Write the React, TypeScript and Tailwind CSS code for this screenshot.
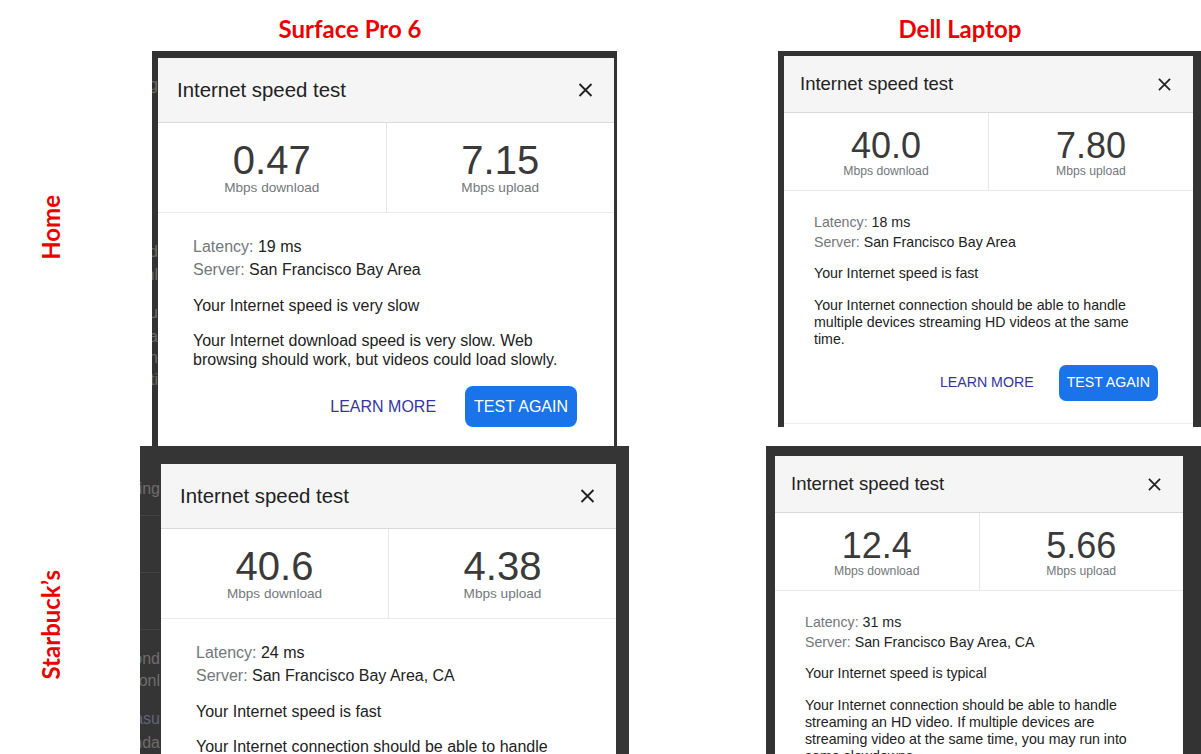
import React from 'react'

type Size = 'lg' | 'sm'

interface Result {
  down: string
  up: string
  latency: string
  server: string
  verdict: string
  detail: string
}

// two scales: Surface Pro screenshots are a little bigger than the Dell ones
const styles = {
  lg: {
    header: 'h-[65px] pl-[19px] pr-[21px]',
    title: 'text-[20.4px]',
    close: 'w-[15px] h-[14px]',
    speeds: 'h-[90px]',
    cell: 'pt-[17px]',
    number: 'text-[40px] leading-[40px]',
    unit: 'text-[13.6px] leading-[16px]',
    body: 'pt-[22px] pl-[35px] text-[16px]',
    meta: 'leading-[23px]',
    verdict: 'mt-[15px] leading-[19px]',
    detail: 'mt-[16px] leading-[19px] w-[385px]',
    actions: 'mt-[17px] pr-[37px] gap-[29px]',
    button: 'h-[41px] px-[9px] rounded-[8px]',
  },
  sm: {
    header: 'h-[57px] pl-[16px] pr-[22px]',
    title: 'text-[18.5px]',
    close: 'w-[13px] h-[13px]',
    speeds: 'h-[78px]',
    cell: 'pt-[15px]',
    number: 'text-[36px] leading-[36px]',
    unit: 'text-[12.2px] leading-[14px]',
    body: 'pt-[21px] pl-[30px] text-[14.2px]',
    meta: 'leading-[20px]',
    verdict: 'mt-[13px] leading-[17px]',
    detail: 'mt-[15px] leading-[17px] w-[332px]',
    actions: 'mt-[17px] pr-[35px] gap-[25px]',
    button: 'h-[36px] px-[8px] rounded-[7px]',
  },
}

const CloseIcon: React.FC<{ className: string }> = ({ className }) => (
  <svg className={className} viewBox="0 0 14 14" fill="none">
    <path d="M1 1L13 13M13 1L1 13" stroke="#222" strokeWidth="1.9" />
  </svg>
)

const Card: React.FC<{ size: Size; r: Result; footer?: boolean }> = ({ size, r, footer }) => {
  const s = styles[size]
  return (
    <div className="flex h-full flex-col overflow-hidden bg-white text-[#222]">
      <div className={`flex shrink-0 items-center justify-between border-b border-[#d9d9d9] bg-[#f5f5f5] ${s.header}`}>
        <span className={s.title}>Internet speed test</span>
        <CloseIcon className={s.close} />
      </div>
      <div className={`flex shrink-0 border-b border-[#ebebeb] ${s.speeds}`}>
        <div className={`flex flex-1 flex-col items-center border-r border-[#e6e6e6] ${s.cell}`}>
          <span className={`text-[#3a3a3a] ${s.number}`}>{r.down}</span>
          <span className={`text-[#73777b] ${s.unit}`}>Mbps download</span>
        </div>
        <div className={`flex flex-1 flex-col items-center ${s.cell}`}>
          <span className={`text-[#3a3a3a] ${s.number}`}>{r.up}</span>
          <span className={`text-[#73777b] ${s.unit}`}>Mbps upload</span>
        </div>
      </div>
      <div className={`flex flex-1 flex-col ${s.body}`}>
        <div className={s.meta}>
          <span className="text-[#73777b]">Latency:</span> {r.latency}
        </div>
        <div className={s.meta}>
          <span className="text-[#73777b]">Server:</span> {r.server}
        </div>
        <div className={s.verdict}>{r.verdict}</div>
        <div className={s.detail}>{r.detail}</div>
        <div className={`flex shrink-0 items-center justify-end ${s.actions}`}>
          <span className="text-[#36369a]">LEARN MORE</span>
          <span className={`flex items-center bg-[#1a73e8] text-white ${s.button}`}>TEST AGAIN</span>
        </div>
      </div>
      {footer && <div className="h-[4px] shrink-0 border-t border-[#ececec]" />}
    </div>
  )
}

const surfaceHome: Result = {
  down: '0.47',
  up: '7.15',
  latency: '19 ms',
  server: 'San Francisco Bay Area',
  verdict: 'Your Internet speed is very slow',
  detail: 'Your Internet download speed is very slow. Web browsing should work, but videos could load slowly.',
}

const dellHome: Result = {
  down: '40.0',
  up: '7.80',
  latency: '18 ms',
  server: 'San Francisco Bay Area',
  verdict: 'Your Internet speed is fast',
  detail: 'Your Internet connection should be able to handle multiple devices streaming HD videos at the same time.',
}

const surfaceCafe: Result = {
  down: '40.6',
  up: '4.38',
  latency: '24 ms',
  server: 'San Francisco Bay Area, CA',
  verdict: 'Your Internet speed is fast',
  detail: 'Your Internet connection should be able to handle multiple devices streaming HD videos at the same time.',
}

const dellCafe: Result = {
  down: '12.4',
  up: '5.66',
  latency: '31 ms',
  server: 'San Francisco Bay Area, CA',
  verdict: 'Your Internet speed is typical',
  detail:
    'Your Internet connection should be able to handle streaming an HD video. If multiple devices are streaming video at the same time, you may run into some slowdowns.',
}

const label = "font-['Lato',sans-serif] font-bold text-[24px] leading-[30px] text-[#ea0000]"

export default function App() {
  return (
    <div className="flex h-[754px] w-[1201px] flex-col overflow-hidden bg-white font-['Liberation_Sans',Arial,sans-serif]">
      {/* column titles */}
      <div className="flex h-[51px] shrink-0 items-start pt-[14px]">
        <div className={`ml-[250px] w-[200px] text-center ${label}`}>Surface Pro 6</div>
        <div className={`ml-[410px] w-[200px] text-center ${label}`}>Dell Laptop</div>
      </div>

      {/* Home row */}
      <div className="flex h-[395px] shrink-0 items-start">
        <div className="flex h-full w-[152px] shrink-0 items-start">
          <span className={`ml-[36px] mt-[144px] rotate-180 [writing-mode:vertical-rl] ${label}`}>Home</span>
        </div>
        <div className="flex h-[395px] w-[465px] shrink-0 overflow-hidden bg-[#333]">
          {/* dimmed page behind the dialog */}
          <div className="flex w-[6px] shrink-0 flex-col overflow-hidden text-[16px] leading-[20px] text-[#6b6b6b]">
            <div className="mt-[24px] flex justify-end whitespace-nowrap">ing</div>
            <div className="mt-[147px] flex justify-end whitespace-nowrap">ond</div>
            <div className="mt-[3px] flex justify-end whitespace-nowrap">onl</div>
            <div className="mt-[18px] flex justify-end whitespace-nowrap">isu</div>
            <div className="mt-[4px] flex justify-end whitespace-nowrap">rda</div>
            <div className="mt-[1px] flex justify-end whitespace-nowrap">ern</div>
            <div className="mt-[2px] flex justify-end whitespace-nowrap">ti</div>
          </div>
          <div className="flex-1 pt-[7px] pr-[3px]">
            <Card size="lg" r={surfaceHome} />
          </div>
        </div>
        <div className="ml-[161px] flex h-[376px] w-[423px] shrink-0 overflow-hidden bg-[#333] pl-[6px] pt-[5px] pr-[8px]">
          <div className="h-full flex-1">
            <Card size="sm" r={dellHome} footer />
          </div>
        </div>
      </div>

      {/* Starbuck's row */}
      <div className="flex h-[308px] shrink-0 items-start">
        <div className="flex h-full w-[140px] shrink-0 items-start">
          <span className={`ml-[36px] mt-[124px] rotate-180 [writing-mode:vertical-rl] ${label}`}>Starbuck’s</span>
        </div>
        <div className="flex h-[308px] w-[489px] shrink-0 overflow-hidden bg-[#353535]">
          <div className="flex w-[21px] shrink-0 flex-col overflow-hidden pr-[1px] text-[16px] leading-[20px] text-[#6e6e6e]">
            <div className="mt-[33px] flex justify-end whitespace-nowrap">Testing</div>
            <div className="mt-[16px] border-t border-[#444]" />
            <div className="mt-[56px] border-t border-[#444]" />
            <div className="mt-[56px] border-t border-[#444]" />
            <div className="mt-[19px] flex justify-end whitespace-nowrap">second</div>
            <div className="mt-[2px] flex justify-end whitespace-nowrap">conl</div>
            <div className="mt-[18px] flex justify-end whitespace-nowrap text-[#62637e]">measu</div>
            <div className="mt-[4px] flex justify-end whitespace-nowrap">standa</div>
          </div>
          <div className="flex-1 pt-[18px] pr-[13px]">
            <Card size="lg" r={surfaceCafe} />
          </div>
        </div>
        <div className="ml-[137px] flex h-[308px] w-[435px] shrink-0 overflow-hidden bg-[#333] pl-[9px] pt-[10px] pr-[18px]">
          <div className="h-full flex-1">
            <Card size="sm" r={dellCafe} />
          </div>
        </div>
      </div>
    </div>
  )
}
